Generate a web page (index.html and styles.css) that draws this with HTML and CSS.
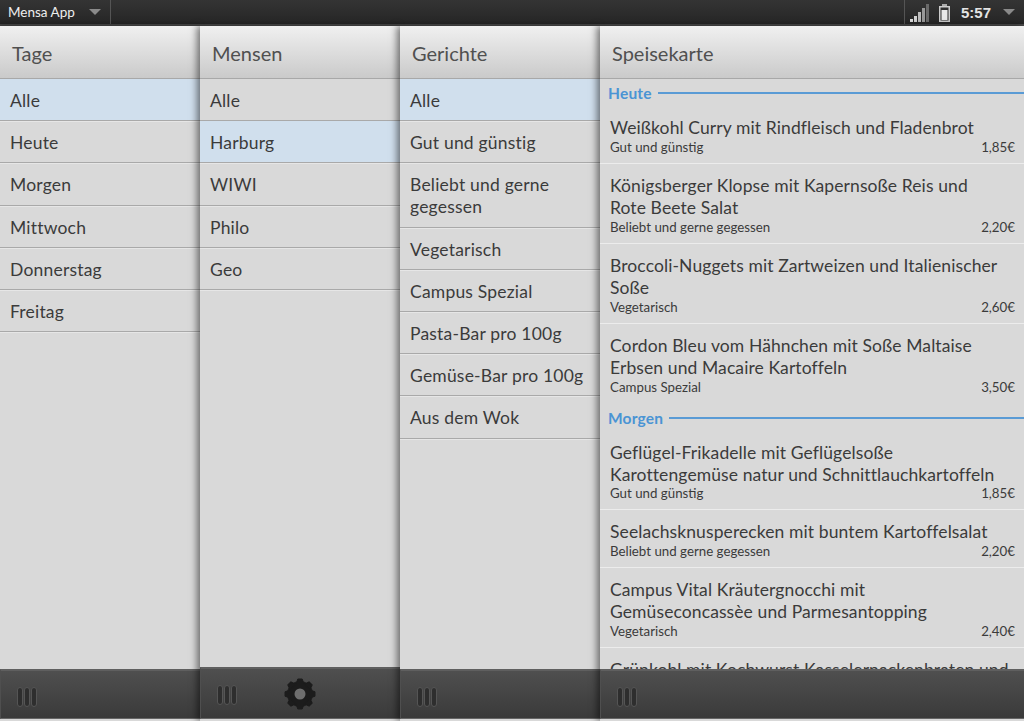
FILE: index.html
```html
<!DOCTYPE html>
<html lang="de">
<head>
    <meta charset="UTF-8">
    <title>Mensa App</title>
    <link rel="stylesheet" href="styles.css">
</head>
<body>
<div id="statusbar">
    <div class="appmenu">
        <span>Mensa App</span>
        <i class="arrow"></i>
    </div>
    <div class="sysmenu">
        <svg class="signal" width="20" height="18" viewBox="0 0 20 18">
            <rect x="0" y="15" width="3" height="3" fill="#ddd"/>
            <rect x="4" y="12" width="3" height="6" fill="#d0d0d0"/>
            <rect x="8" y="8" width="3" height="10" fill="#bbb"/>
            <rect x="12" y="4" width="3" height="14" fill="#999"/>
            <rect x="16" y="0" width="3" height="18" fill="#6a6a6a"/>
        </svg>
        <svg class="battery" width="11" height="18" viewBox="0 0 11 18">
            <rect x="3" y="0" width="5" height="3" fill="#aaa"/>
            <rect x="0.750" y="2.750" width="9.500" height="14.500" fill="none" stroke="#ccc" stroke-width="1.500"/>
            <rect x="2.500" y="6" width="6" height="10" fill="#e8e8e8"/>
        </svg>
        <span class="clock">5:57</span>
        <i class="arrow"></i>
    </div>
</div>
<div id="panels">
    <div class="panel">
        <div class="head">Tage</div>
        <ul class="list">
            <li class="sel">Alle</li>
            <li>Heute</li>
            <li>Morgen</li>
            <li>Mittwoch</li>
            <li>Donnerstag</li>
            <li>Freitag</li>
        </ul>
        <div class="foot">
            <div class="grip"><b></b><b></b><b></b></div>
        </div>
    </div>
    <div class="panel">
        <div class="head">Mensen</div>
        <ul class="list">
            <li>Alle</li>
            <li class="sel">Harburg</li>
            <li>WIWI</li>
            <li>Philo</li>
            <li>Geo</li>
        </ul>
        <div class="foot tall">
            <div class="grip"><b></b><b></b><b></b></div>
            <svg class="gear" width="34" height="34" viewBox="0 0 34 34">
                <g fill="#1c1c1c" stroke="#1c1c1c" stroke-width="1" stroke-linejoin="round">
                    <circle cx="17" cy="17" r="12.500"/>
                    <path d="M14.800 2h4.400l1.800 5h-8z"/>
                    <path d="M14.800 2h4.400l1.800 5h-8z" transform="rotate(45 17 17)"/>
                    <path d="M14.800 2h4.400l1.800 5h-8z" transform="rotate(90 17 17)"/>
                    <path d="M14.800 2h4.400l1.800 5h-8z" transform="rotate(135 17 17)"/>
                    <path d="M14.800 2h4.400l1.800 5h-8z" transform="rotate(180 17 17)"/>
                    <path d="M14.800 2h4.400l1.800 5h-8z" transform="rotate(225 17 17)"/>
                    <path d="M14.800 2h4.400l1.800 5h-8z" transform="rotate(270 17 17)"/>
                    <path d="M14.800 2h4.400l1.800 5h-8z" transform="rotate(315 17 17)"/>
                </g>
                <circle cx="17" cy="17" r="5.500" fill="#6e6e6e"/>
            </svg>
        </div>
    </div>
    <div class="panel">
        <div class="head">Gerichte</div>
        <ul class="list">
            <li class="sel">Alle</li>
            <li>Gut und günstig</li>
            <li>Beliebt und gerne gegessen</li>
            <li>Vegetarisch</li>
            <li>Campus Spezial</li>
            <li>Pasta-Bar pro 100g</li>
            <li>Gemüse-Bar pro 100g</li>
            <li>Aus dem Wok</li>
        </ul>
        <div class="foot">
            <div class="grip"><b></b><b></b><b></b></div>
        </div>
    </div>
    <div class="panel wide">
        <div class="head">Speisekarte</div>
        <div class="menu">
            <h3 class="day"><span>Heute</span></h3>
            <div class="dish">
                <p class="name">Weißkohl Curry mit Rindfleisch und Fladenbrot</p>
                <p class="info"><span>Gut und günstig</span><span>1,85€</span></p>
            </div>
            <div class="dish">
                <p class="name">Königsberger Klopse mit Kapernsoße Reis und Rote Beete Salat</p>
                <p class="info"><span>Beliebt und gerne gegessen</span><span>2,20€</span></p>
            </div>
            <div class="dish">
                <p class="name">Broccoli-Nuggets mit Zartweizen und Italienischer Soße</p>
                <p class="info"><span>Vegetarisch</span><span>2,60€</span></p>
            </div>
            <div class="dish last">
                <p class="name">Cordon Bleu vom Hähnchen mit Soße Maltaise Erbsen und Macaire Kartoffeln</p>
                <p class="info"><span>Campus Spezial</span><span>3,50€</span></p>
            </div>
            <h3 class="day"><span>Morgen</span></h3>
            <div class="dish snug">
                <p class="name">Geflügel-Frikadelle mit Geflügelsoße Karottengemüse natur und Schnittlauchkartoffeln</p>
                <p class="info"><span>Gut und günstig</span><span>1,85€</span></p>
            </div>
            <div class="dish">
                <p class="name">Seelachsknusperecken mit buntem Kartoffelsalat</p>
                <p class="info"><span>Beliebt und gerne gegessen</span><span>2,20€</span></p>
            </div>
            <div class="dish">
                <p class="name">Campus Vital Kräutergnocchi mit Gemüseconcassèe und Parmesantopping</p>
                <p class="info"><span>Vegetarisch</span><span>2,40€</span></p>
            </div>
            <div class="dish cut">
                <p class="name">Grünkohl mit Kochwurst Kasselernackenbraten und</p>
            </div>
        </div>
        <div class="foot">
            <div class="grip"><b></b><b></b><b></b></div>
        </div>
    </div>
</div>
</body>
</html>
```

FILE: styles.css
```css
html,body,ul,li,p,h3{
    margin:0;
    padding:0;
    list-style: none;
}
body{
    width:1024px;
    height:721px;
    overflow: hidden;
    background-color:#4a4a4a;
    font-family: Lato, "Open Sans", sans-serif;
    color:#3b3b3b;
}
#statusbar{
    height:26px;
    display: flex;
    justify-content: space-between;
    background:linear-gradient(#343434,#262626);
    border-bottom:2px solid #4a4a4a;
    box-sizing: border-box;
    color:#eee;
}
.appmenu{
    width:111px;
    display: flex;
    align-items: center;
    justify-content: space-between;
    box-sizing: border-box;
    padding:0 9px 0 8px;
    font-size:13.500px;
    border-right:1px solid #555;
}
.sysmenu{
    width:120px;
    display: flex;
    align-items: center;
    box-sizing: border-box;
    padding-left:5px;
    border-left:1px solid #555;
}
.signal{
    margin:2px 9px 0 0;
}
.battery{
    margin-top:2px;
}
.clock{
    font-family: "Liberation Sans", sans-serif;
    font-size:15px;
    font-weight:bold;
    color:#e4e4e4;
    margin:0 12px 0 11px;
}
.arrow{
    width:0;
    height:0;
    border-left:6.500px solid transparent;
    border-right:6.500px solid transparent;
    border-top:6px solid #8a8a8a;
}
#panels{
    display: flex;
    height:695px;
}
.panel{
    position: relative;
    width:200px;
    flex:none;
    display: flex;
    flex-direction: column;
    background-color:#d9d9d9;
    box-shadow:-3px 0 7px rgba(0,0,0,.5);
}
.panel.wide{
    width:424px;
}
.head{
    height:53px;
    flex:none;
    box-sizing: border-box;
    padding:0 12px;
    line-height:54px;
    font-size:20px;
    color:#505050;
    background:linear-gradient(#f0f0f0,#cacaca);
    border-bottom:1px solid #a8a8a8;
}
.list{
    flex:1;
}
.list li{
    padding:11px 10px 8.200px;
    font-size:17.500px;
    letter-spacing:.2px;
    line-height:22px;
    border-bottom:1px solid #a9a9a9;
    box-shadow:0 1px 0 #e6e6e6;
}
.list li.sel{
    background-color:#d0dfed;
}
.menu{
    flex:1;
    min-height:0;
    overflow: hidden;
}
.day{
    display: flex;
    align-items: center;
    height:27px;
    padding-left:8px;
    font-size:15.500px;
    letter-spacing:.2px;
    font-weight:bold;
    color:#4a94d4;
}
.day::after{
    content:"";
    flex:1;
    height:2px;
    margin-left:6px;
    background-color:#5a9bd5;
}
.dish{
    padding:11px 9px 8px 10px;
    border-bottom:1px solid #ececec;
}
.dish.last{
    border-bottom:0;
    padding-bottom:9px;
}
.name{
    font-size:17.500px;
    letter-spacing:.1px;
    line-height:22px;
    padding-right:16px;
}
.dish.snug .name{
    line-height:21.500px;
}
.dish.cut .name{
    padding-right:0;
}
.info{
    display: flex;
    justify-content: space-between;
    font-size:13.300px;
    line-height:16px;
}
.foot{
    position: relative;
    height:50px;
    flex:none;
    box-sizing: border-box;
    display: flex;
    align-items: center;
    padding:4px 0 0 16px;
    background:linear-gradient(#4f4f4f,#3a3a3a);
    border-top:2px solid #5f5f5f;
    border-left:1px solid #4f4f4f;
    border-bottom:1px solid #666;
    margin-bottom:2px;
}
.foot.tall{
    height:52px;
    padding-top:3px;
}
.grip{
    display: flex;
    gap:1px;
}
.grip b{
    width:6px;
    height:20px;
    border-radius:3px;
    background-color:#2e2e2e;
    border:1px solid #555;
    box-sizing: border-box;
}
.gear{
    margin:-3px 0 0 46px;
}
```
